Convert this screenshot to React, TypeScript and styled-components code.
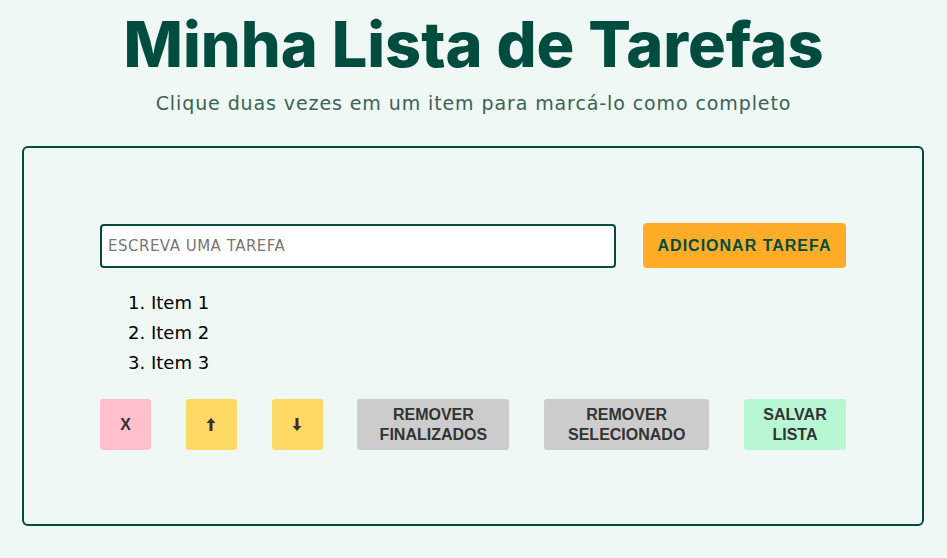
import React from "react";
import styled, { createGlobalStyle } from "styled-components";

const Global = createGlobalStyle`
  html, body { margin: 0; padding: 0; }
  body {
    background: #eff8f4;
    font-family: "DejaVu Sans", "Inter", sans-serif;
    color: #000;
  }
`;

const Page = styled.main`
  display: flex;
  flex-direction: column;
  align-items: center;
  padding-top: 8px;
`;

const Title = styled.h1`
  margin: 0;
  font-family: "Inter", sans-serif;
  font-weight: 800;
  font-size: 63px;
  line-height: 72px;
  color: #004d40;
`;

const Subtitle = styled.p`
  margin: 10px 0 0;
  font-family: "DejaVu Sans", sans-serif;
  font-size: 19px;
  letter-spacing: 0.9px;
  line-height: 27px;
  color: #3b6257;
  font-weight: 400;
`;

const Card = styled.section`
  box-sizing: border-box;
  align-self: stretch;
  margin: 29px 23px 0 22px;
  border: 2px solid #004d40;
  border-radius: 6px;
  padding: 75px 76px 74px 76px;
  display: flex;
  flex-direction: column;
`;

const FormRow = styled.div`
  display: flex;
  align-items: center;
  gap: 27px;
`;

const Input = styled.input`
  box-sizing: border-box;
  width: 516px;
  height: 44px;
  border: 2px solid #004d40;
  border-radius: 4px;
  background: #fff;
  padding: 0 6px;
  font-family: "DejaVu Sans", sans-serif;
  font-size: 15px;
  letter-spacing: 0.5px;
  outline: none;
  &::placeholder { color: #777; }
`;

const AddButton = styled.button`
  box-sizing: border-box;
  width: 203px;
  height: 45px;
  border: none;
  border-radius: 4px;
  background: #ffac28;
  color: #004d40;
  font-family: "Liberation Sans", Arial, sans-serif;
  font-weight: 700;
  font-size: 16px;
  letter-spacing: 1px;
  padding: 0;
`;

const List = styled.ol`
  margin: 20px 0 0;
  padding-left: 51px;
  font-family: "DejaVu Sans", sans-serif;
  font-size: 18px;
  line-height: 30px;
`;

const Item = styled.li``;

const ActionRow = styled.div`
  display: flex;
  justify-content: space-between;
  margin-top: 21px;
`;

const ActionButton = styled.button<{ $bg: string; $w: number }>`
  box-sizing: border-box;
  width: ${(p) => p.$w}px;
  height: 51px;
  border: none;
  border-radius: 3px;
  background: ${(p) => p.$bg};
  color: #333;
  font-family: "Liberation Sans", Arial, sans-serif;
  font-weight: 700;
  font-size: 16px;
  line-height: 20px;
  padding: 0;
  display: flex;
  align-items: center;
  justify-content: center;
  text-align: center;
`;

const Arrow = ({ down }: { down?: boolean }) => (
  <svg width="10" height="13" viewBox="0 0 10 13" style={{ transform: down ? "rotate(180deg)" : undefined }}>
    <path d="M5 0 L9.5 5 L6.5 5 L6.5 13 L3.5 13 L3.5 5 L0.5 5 Z" fill="#333" />
  </svg>
);

export default function App() {
  return (
    <>
      <Global />
      <Page>
        <Title>Minha Lista de Tarefas</Title>
        <Subtitle>Clique duas vezes em um item para marcá-lo como completo</Subtitle>
        <Card>
          <FormRow>
            <Input placeholder="ESCREVA UMA TAREFA" />
            <AddButton>ADICIONAR TAREFA</AddButton>
          </FormRow>
          <List>
            <Item>Item 1</Item>
            <Item>Item 2</Item>
            <Item>Item 3</Item>
          </List>
          <ActionRow>
            <ActionButton $bg="#ffc0cb" $w={51}>X</ActionButton>
            <ActionButton $bg="#ffd966" $w={51}><Arrow /></ActionButton>
            <ActionButton $bg="#ffd966" $w={51}><Arrow down /></ActionButton>
            <ActionButton $bg="#cccccc" $w={152}>REMOVER<br />FINALIZADOS</ActionButton>
            <ActionButton $bg="#cccccc" $w={165}>REMOVER<br />SELECIONADO</ActionButton>
            <ActionButton $bg="#b8f7d4" $w={102}>SALVAR<br />LISTA</ActionButton>
          </ActionRow>
        </Card>
      </Page>
    </>
  );
}
